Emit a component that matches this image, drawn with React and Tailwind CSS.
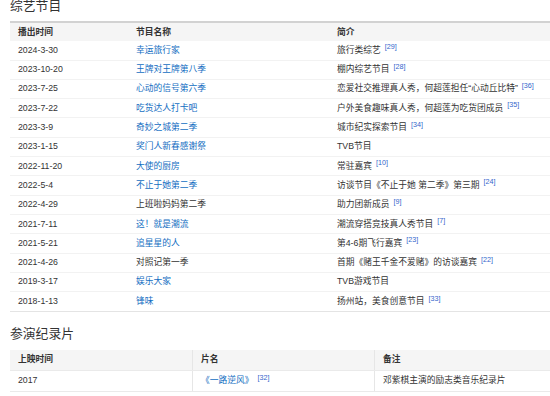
import React from 'react';

const shows = [
  { date: '2024-3-30', name: '幸运旅行家', link: true, note: '旅行类综艺', ref: '29' },
  { date: '2023-10-20', name: '王牌对王牌第八季', link: true, note: '棚内综艺节目', ref: '28' },
  { date: '2023-7-25', name: '心动的信号第六季', link: true, note: '恋爱社交推理真人秀，何超莲担任\u201c心动丘比特\u201d', ref: '36' },
  { date: '2023-7-22', name: '吃货达人打卡吧', link: true, note: '户外美食趣味真人秀，何超莲为吃货团成员', ref: '35' },
  { date: '2023-3-9', name: '奇妙之城第二季', link: true, note: '城市纪实探索节目', ref: '34' },
  { date: '2023-1-15', name: '奖门人新春感谢祭', link: true, note: 'TVB节目' },
  { date: '2022-11-20', name: '大使的厨房', link: true, note: '常驻嘉宾', ref: '10' },
  { date: '2022-5-4', name: '不止于她第二季', link: true, note: '访谈节目《不止于她 第二季》第三期', ref: '24' },
  { date: '2022-4-29', name: '上班啦妈妈第二季', link: false, note: '助力团新成员', ref: '9' },
  { date: '2021-7-11', name: '这！就是潮流', link: true, note: '潮流穿搭竞技真人秀节目', ref: '7' },
  { date: '2021-5-21', name: '追星星的人', link: true, note: '第4-6期飞行嘉宾', ref: '23' },
  { date: '2021-4-26', name: '对照记第一季', link: false, note: '首期《赌王千金不爱赌》的访谈嘉宾', ref: '22' },
  { date: '2019-3-17', name: '娱乐大家', link: true, note: 'TVB游戏节目' },
  { date: '2018-1-13', name: '锋味', link: true, note: '扬州站，美食创意节目', ref: '33' },
];

function Ref({ n }) {
  return (
    <span className="ml-[4px] relative top-[-3.5px] text-[7.2px] leading-none text-[#3366cc]">[{n}]</span>
  );
}

function Title({ children, className }) {
  return (
    <div className={`h-[16px] leading-[16px] text-[12.8px] text-[#333] ${className}`}>{children}</div>
  );
}

export default function App() {
  return (
    <div
      className="w-[550px] h-[396px] overflow-hidden bg-white pl-[10px] text-[#333]"
      style={{ fontFamily: '"Liberation Sans", "Noto Sans CJK SC", sans-serif' }}
    >
      <Title className="mt-[-2px]">综艺节目</Title>

      <div className="mt-[7px] border-t-2 border-[#d2d2d2] border-b border-b-[#e4e4e4] text-[8.75px]">
        <div className="grid grid-cols-[118px_201px_1fr] h-[18.3px] items-center bg-[#f5f5f5] font-bold">
          <div className="px-[8px]">播出时间</div>
          <div className="px-[8px]">节目名称</div>
          <div className="px-[8px]">简介</div>
        </div>
        {shows.map((s, i) => (
          <div
            key={s.date}
            className={`grid grid-cols-[118px_201px_1fr] h-[19.3px] items-center ${i < shows.length - 1 ? 'border-b border-[#f2f2f2]' : ''}`}
          >
            <div className="px-[8px] whitespace-nowrap">{s.date}</div>
            <div className={`px-[8px] whitespace-nowrap ${s.link ? 'text-[#136ec2]' : ''}`}>{s.name}</div>
            <div className="px-[8px] whitespace-nowrap">
              {s.note}
              {s.ref && <Ref n={s.ref} />}
            </div>
          </div>
        ))}
      </div>

      <Title className="mt-[13.5px]">参演纪录片</Title>

      <div className="mt-[8px] text-[8.75px]">
        <div className="grid grid-cols-[182px_182px_1fr] h-[21px] bg-[#f5f5f5] font-bold border-b border-[#eaeaea]">
          <div className="px-[8px] flex items-center">上映时间</div>
          <div className="px-[8px] flex items-center border-l border-[#e6e6e6]">片名</div>
          <div className="px-[8px] flex items-center border-l border-[#e6e6e6]">备注</div>
        </div>
        <div className="grid grid-cols-[182px_182px_1fr] h-[21px] border-b border-[#eaeaea]">
          <div className="px-[8px] flex items-center">2017</div>
          <div className="px-[8px] flex items-center border-l border-[#e6e6e6] whitespace-nowrap">
            <span className="text-[#136ec2]">《一路逆风》</span>
            <Ref n="32" />
          </div>
          <div className="px-[8px] flex items-center border-l border-[#e6e6e6] whitespace-nowrap">邓紫棋主演的励志类音乐纪录片</div>
        </div>
      </div>
    </div>
  );
}
